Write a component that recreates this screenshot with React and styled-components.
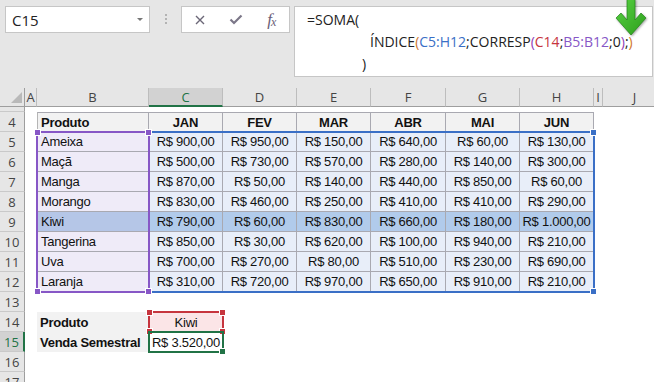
import React from 'react';
import styled, { createGlobalStyle } from 'styled-components';

const Global = createGlobalStyle`
  html, body { margin: 0; padding: 0; background: #fff; overflow: hidden; }
  #root { width: 654px; height: 382px; overflow: hidden; }
`;

const Window = styled.div`
  width: 654px;
  height: 382px;
  display: flex;
  flex-direction: column;
  overflow: hidden;
  background: #fff;
  font-family: "Liberation Sans", Arial, sans-serif;
`;

/* ---------- formula bar ---------- */
const FormulaArea = styled.div`
  position: relative;
  flex: none;
  height: 88px;
  box-sizing: border-box;
  background: #e6e6e6;
  display: flex;
  align-items: flex-start;
  padding: 6px 1px 0 5px;
`;

const NameBox = styled.div`
  width: 145px;
  height: 27px;
  flex: none;
  box-sizing: border-box;
  background: #fff;
  border: 1px solid #c6c6c6;
  display: flex;
  align-items: center;
  justify-content: space-between;
  padding: 0 6px;
  font: 15px "Open Sans", sans-serif;
  color: #222;
`;

const Caret = styled.span`
  width: 0;
  height: 0;
  border-left: 3px solid transparent;
  border-right: 3px solid transparent;
  border-top: 3px solid #777;
`;

const Grip = styled.div`
  flex: none;
  margin: 8px 14px 0 15px;
  display: flex;
  flex-direction: column;
  gap: 2px;
`;

const GripDot = styled.span`
  width: 2px;
  height: 2px;
  background: #b3b3b3;
`;

const ButtonsBox = styled.div`
  width: 109px;
  height: 27px;
  flex: none;
  box-sizing: border-box;
  background: #fff;
  border: 1px solid #c6c6c6;
  display: flex;
  align-items: center;
`;

const IconButton = styled.div`
  width: 36px;
  height: 100%;
  display: flex;
  align-items: center;
  justify-content: center;
  color: #6d6878;
`;

const Fx = styled.span`
  font-family: "Liberation Serif", serif;
  font-style: italic;
  font-size: 17px;
  color: #6b6078;
  letter-spacing: -1px;
  line-height: 1;
`;

const FxSub = styled.span`
  font-size: 12px;
  position: relative;
  top: 1px;
`;

const FormulaBox = styled.div`
  flex: 1;
  height: 71px;
  margin-left: 4px;
  box-sizing: border-box;
  background: #fff;
  border: 1px solid #c6c6c6;
  padding: 2px 0 0 12px;
  font: 14px/22px "Open Sans", sans-serif;
  color: #222;
  white-space: pre;
`;

const FLine = styled.div`
  padding-left: ${(p) => p.$indent || 0}px;
`;

const Tok = styled.span`
  color: ${(p) => p.$c || '#222'};
`;

const ArrowMark = styled.svg`
  position: absolute;
  left: 610px;
  top: -1px;
  filter: drop-shadow(1px 1px 1px rgba(0, 0, 0, 0.35));
`;

/* ---------- sheet ---------- */
const Sheet = styled.div`
  position: relative;
  flex: none;
  display: grid;
  grid-template-columns: 25px 12px 112px 74px 74px 74px 75px 74px 74px 9px 64px;
  grid-template-rows: 19px 5px repeat(14, 20px);
  font-family: "Liberation Sans", Arial, sans-serif;
  font-size: 13px;
  color: #111;
`;

const Corner = styled.div`
  grid-column: 1;
  grid-row: 1;
  box-sizing: border-box;
  background: #e6e6e6;
  border-right: 1px solid #9e9e9e;
  border-bottom: 1px solid #9e9e9e;
  display: flex;
  align-items: flex-end;
  justify-content: flex-end;
  padding: 0 2px 3px 0;
`;

const CornerTri = styled.span`
  width: 0;
  height: 0;
  border-left: 11px solid transparent;
  border-bottom: 11px solid #b9b9b9;
`;

const ColHead = styled.div`
  grid-row: 1;
  grid-column: ${(p) => p.$col};
  box-sizing: border-box;
  background: ${(p) => (p.$active ? '#d2d2d2' : '#e6e6e6')};
  color: ${(p) => (p.$active ? '#217346' : '#444')};
  border-right: 1px solid #bdbdbd;
  border-bottom: ${(p) => (p.$active ? '2px solid #217346' : '1px solid #9e9e9e')};
  display: flex;
  align-items: center;
  justify-content: center;
  font: 13px "Open Sans", sans-serif;
  overflow: hidden;
`;

const RowHead = styled.div`
  grid-column: 1;
  grid-row: ${(p) => p.$row};
  box-sizing: border-box;
  background: ${(p) => (p.$active ? '#d2d2d2' : '#e6e6e6')};
  color: ${(p) => (p.$active ? '#217346' : '#444')};
  border-bottom: 1px solid #c9c9c9;
  border-right: ${(p) => (p.$active ? '2px solid #217346' : '1px solid #9e9e9e')};
  display: flex;
  align-items: center;
  justify-content: center;
  font: 13px "Open Sans", sans-serif;
`;

const Cell = styled.div`
  grid-column: ${(p) => p.$col};
  grid-row: ${(p) => p.$row};
  box-sizing: border-box;
  display: flex;
  align-items: center;
  justify-content: ${(p) => (p.$left ? 'flex-start' : 'center')};
  padding-left: ${(p) => (p.$left ? '3px' : '0')};
  white-space: nowrap;
  overflow: hidden;
  letter-spacing: -0.25px;
  background: ${(p) => p.$bg || 'transparent'};
  font-weight: ${(p) => (p.$bold ? 700 : 400)};
`;

const TableCell = styled(Cell)`
  border-right: 1px solid #a9a9b1;
  border-bottom: 1px solid #a9a9b1;
  border-top: ${(p) => (p.$top ? '1px solid #a9a9b1' : '0')};
  border-left: ${(p) => (p.$first ? '1px solid #b5b5b5' : '0')};
`;

const RangeBox = styled.div`
  grid-column: ${(p) => p.$cols};
  grid-row: ${(p) => p.$rows};
  position: relative;
  margin: -1px;
  box-sizing: border-box;
  border: 2px solid ${(p) => p.$color};
  pointer-events: none;
`;

const Handle = styled.span`
  position: absolute;
  width: 5px;
  height: 5px;
  background: ${(p) => p.$color};
  box-shadow: 0 0 0 1px #fff;
  ${(p) => (p.$pos.includes('t') ? 'top: -3px;' : 'bottom: -3px;')}
  ${(p) => (p.$pos.includes('l') ? 'left: -3px;' : 'right: -3px;')}
`;

const PURPLE = '#8757c6';
const BLUE = '#3a6fc6';
const RED = '#c6353e';
const GREEN = '#217346';

const months = ['JAN', 'FEV', 'MAR', 'ABR', 'MAI', 'JUN'];
const data = [
  ['Ameixa', ['900,00', '950,00', '150,00', '640,00', '60,00', '130,00']],
  ['Maçã', ['500,00', '730,00', '570,00', '280,00', '140,00', '300,00']],
  ['Manga', ['870,00', '50,00', '140,00', '440,00', '850,00', '60,00']],
  ['Morango', ['830,00', '460,00', '250,00', '410,00', '410,00', '290,00']],
  ['Kiwi', ['790,00', '60,00', '830,00', '660,00', '180,00', '1.000,00']],
  ['Tangerina', ['850,00', '30,00', '620,00', '100,00', '940,00', '210,00']],
  ['Uva', ['700,00', '270,00', '80,00', '510,00', '230,00', '690,00']],
  ['Laranja', ['310,00', '720,00', '970,00', '650,00', '910,00', '210,00']],
];

const cols = ['A', 'B', 'C', 'D', 'E', 'F', 'G', 'H', 'I', 'J'];
const sheetRows = [4, 5, 6, 7, 8, 9, 10, 11, 12, 13, 14, 15, 16, 17];
const g = (r) => r - 1; // sheet row -> grid row

export default function App() {
  return (
    <Window>
      <Global />
      <FormulaArea>
        <NameBox>
          C15
          <Caret />
        </NameBox>
        <Grip>
          <GripDot />
          <GripDot />
          <GripDot />
        </Grip>
        <ButtonsBox>
          <IconButton>
            <svg width="10" height="10" viewBox="0 0 10 10">
              <path d="M1 1 L9 9 M9 1 L1 9" stroke="#6b6777" strokeWidth="1.4" fill="none" />
            </svg>
          </IconButton>
          <IconButton>
            <svg width="14" height="11" viewBox="0 0 14 11">
              <path d="M1.5 5.5 L5 9 L12.5 1.5" stroke="#7b7788" strokeWidth="2.2" fill="none" />
            </svg>
          </IconButton>
          <IconButton>
            <Fx>
              f<FxSub>x</FxSub>
            </Fx>
          </IconButton>
        </ButtonsBox>
        <FormulaBox>
          <FLine>=SOMA(</FLine>
          <FLine $indent={63}>
            <Tok>ÍNDICE</Tok>
            <Tok $c="#d0782c">(</Tok>
            <Tok $c={BLUE}>C5:H12</Tok>
            <Tok>;CORRESP</Tok>
            <Tok $c="#9040b8">(</Tok>
            <Tok $c={RED}>C14</Tok>
            <Tok>;</Tok>
            <Tok $c={PURPLE}>B5:B12</Tok>
            <Tok>;0</Tok>
            <Tok $c="#9040b8">)</Tok>
            <Tok>;</Tok>
            <Tok $c="#d0782c">)</Tok>
          </FLine>
          <FLine $indent={55}>)</FLine>
        </FormulaBox>
        <ArrowMark width="40" height="40" viewBox="0 0 40 40">
          <defs>
            <linearGradient id="ag" x1="0" y1="0" x2="1" y2="1">
              <stop offset="0" stopColor="#58d143" />
              <stop offset="1" stopColor="#2d9f1c" />
            </linearGradient>
          </defs>
          <polygon
            points="17,0 25,0 25,21 31,14 36,19 21,36 6,19 11,14 17,21"
            fill="url(#ag)"
            stroke="#23821a"
            strokeWidth="0.7"
          />
        </ArrowMark>
      </FormulaArea>

      <Sheet>
        <Corner>
          <CornerTri />
        </Corner>
        {cols.map((c, i) => (
          <ColHead key={c} $col={i + 2} $active={c === 'C'}>
            {c}
          </ColHead>
        ))}
        <RowHead $row={2} />
        {sheetRows.map((r) => (
          <RowHead key={r} $row={g(r)} $active={r === 15}>
            {r}
          </RowHead>
        ))}

        {/* header row */}
        <TableCell $col={3} $row={g(4)} $left $bold $top $first $bg="#f2f2f2">
          Produto
        </TableCell>
        {months.map((m, i) => (
          <TableCell key={m} $col={4 + i} $row={g(4)} $bold $top $bg="#f2f2f2">
            {m}
          </TableCell>
        ))}

        {data.map(([name, vals], ri) => {
          const row = g(5 + ri);
          const hl = name === 'Kiwi';
          return (
            <React.Fragment key={name}>
              <TableCell $col={3} $row={row} $left $first $bg={hl ? '#b5c6e7' : '#efebf8'}>
                {name}
              </TableCell>
              {vals.map((v, ci) => (
                <TableCell key={ci} $col={4 + ci} $row={row} $bg={hl ? '#b1cbeb' : '#e8eef9'}>
                  R$ {v}
                </TableCell>
              ))}
            </React.Fragment>
          );
        })}

        <Cell $col={3} $row={g(14)} $left $bold $bg="#f2f2f2">
          Produto
        </Cell>
        <Cell $col={4} $row={g(14)} $bg="#fbe5e7">
          Kiwi
        </Cell>
        <Cell $col={3} $row={g(15)} $left $bold $bg="#f2f2f2">
          Venda Semestral
        </Cell>
        <Cell $col={4} $row={g(15)}>R$ 3.520,00</Cell>

        {/* reference highlights */}
        <RangeBox $cols="4 / 10" $rows="4 / 12" $color={BLUE}>
          <Handle $pos="tr" $color={BLUE} />
          <Handle $pos="br" $color={BLUE} />
        </RangeBox>
        <RangeBox $cols="3 / 4" $rows="4 / 12" $color={PURPLE}>
          <Handle $pos="tl" $color={PURPLE} />
          <Handle $pos="tr" $color={PURPLE} />
          <Handle $pos="bl" $color={PURPLE} />
          <Handle $pos="br" $color={PURPLE} />
        </RangeBox>
        <RangeBox $cols="4 / 5" $rows="13 / 14" $color={RED}>
          <Handle $pos="tl" $color={RED} />
          <Handle $pos="tr" $color={RED} />
          <Handle $pos="bl" $color={RED} />
          <Handle $pos="br" $color={RED} />
        </RangeBox>
        <RangeBox $cols="4 / 5" $rows="14 / 15" $color={GREEN}>
          <Handle $pos="br" $color={GREEN} />
        </RangeBox>
      </Sheet>
    </Window>
  );
}
